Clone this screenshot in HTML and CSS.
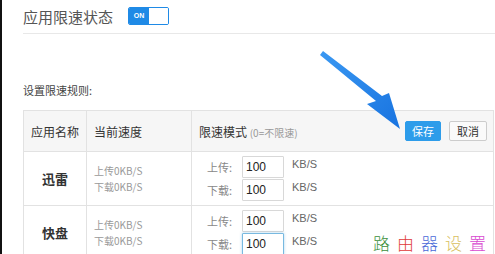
FILE: index.html
```html
<!DOCTYPE html>
<html lang="zh-CN">
<head>
    <meta charset="UTF-8">
    <meta name="viewport" content="width=device-width, initial-scale=1.0">
    <title>应用限速</title>
    <link rel="stylesheet" href="styles.css">
</head>
<body>
    <div class="page">
        <div class="status-bar">
            <h2 class="status-title">应用限速状态</h2>
            <div class="toggle">
                <span class="toggle-on">ON</span>
                <span class="toggle-knob"></span>
            </div>
        </div>

        <div class="rules-label">设置限速规则:</div>

        <table class="rules">
            <colgroup>
                <col class="col-name">
                <col class="col-speed">
                <col class="col-mode">
            </colgroup>
            <thead>
                <tr>
                    <th class="center">应用名称</th>
                    <th>当前速度</th>
                    <th>
                        <div class="mode-head">
                            <span>限速模式 <small>(0=不限速)</small></span>
                            <span class="actions">
                                <button class="btn btn-save">保存</button>
                                <button class="btn btn-cancel">取消</button>
                            </span>
                        </div>
                    </th>
                </tr>
            </thead>
            <tbody>
                <tr>
                    <td class="center app-name">迅雷</td>
                    <td class="speed">上传0KB/S<br>下载0KB/S</td>
                    <td>
                        <div class="limit">
                            <label>上传:</label><input type="text" value="100"><span class="unit">KB/S</span>
                        </div>
                        <div class="limit">
                            <label>下载:</label><input type="text" value="100"><span class="unit">KB/S</span>
                        </div>
                    </td>
                </tr>
                <tr>
                    <td class="center app-name">快盘</td>
                    <td class="speed">上传0KB/S<br>下载0KB/S</td>
                    <td>
                        <div class="limit">
                            <label>上传:</label><input type="text" value="100"><span class="unit">KB/S</span>
                        </div>
                        <div class="limit">
                            <label>下载:</label><input type="text" value="100" class="focused"><span class="unit">KB/S</span>
                        </div>
                    </td>
                </tr>
            </tbody>
        </table>

        <div class="watermark">
            <span class="w1">路</span><span class="w2">由</span><span class="w3">器</span><span class="w4">设</span><span class="w5">置</span>
        </div>

        <svg class="arrow" width="495" height="254" viewBox="0 0 495 254">
            <defs>
                <linearGradient id="arrowFill" x1="0" y1="0" x2="1" y2="1">
                    <stop offset="0" stop-color="#3a98f2"/>
                    <stop offset="1" stop-color="#1873e0"/>
                </linearGradient>
            </defs>
            <polygon points="320,55 323,51 382,96 389,93 400,129 367,104 376,101" fill="url(#arrowFill)"/>
        </svg>
    </div>
</body>
</html>
```

FILE: styles.css
```css
:root {
    --text-color: #444;
    --muted-color: #888;
    --border-color: #e2e2e2;
    --blue: #1f8ae6;
}

* {
    box-sizing: border-box;
}

body {
    margin: 0;
    font-family: "Noto Sans CJK SC", "Liberation Sans", sans-serif;
    color: var(--text-color);
    background: #fff;
    overflow: hidden;
}

.page {
    position: relative;
    height: 254px;
    border-left: 2px solid #111;
    padding-left: 21px;
}

.status-bar {
    display: flex;
    align-items: center;
    gap: 15px;
    height: 34px;
    padding-bottom: 1px;
    border-bottom: 1px solid #e8e8e8;
}

.status-title {
    margin: 0;
    font-size: 15px;
    font-weight: normal;
    color: #555;
}

.toggle {
    display: flex;
    width: 41px;
    height: 18px;
    border: 1px solid var(--blue);
    border-radius: 2px;
    overflow: hidden;
}

.toggle-on {
    width: 20px;
    background: var(--blue);
    color: #fff;
    font-family: "Liberation Sans", sans-serif;
    font-size: 7px;
    font-weight: bold;
    line-height: 16px;
    text-align: center;
}

.toggle-knob {
    flex: 1;
    background: #fff;
}

.rules-label {
    margin-top: 48px;
    font-size: 11px;
    line-height: 16px;
    color: #444;
}

.rules {
    width: 471px;
    margin-top: 12px;
    border-collapse: collapse;
    font-size: 12px;
}

.col-name { width: 63px; }
.col-speed { width: 105px; }

.rules th,
.rules td {
    border: 1px solid var(--border-color);
    padding: 0 7px;
    text-align: left;
    vertical-align: middle;
}

.rules th {
    height: 41px;
    background: #f6f6f6;
    font-weight: normal;
    color: #333;
}

.rules td {
    height: 54px;
}

.rules .center {
    text-align: center;
}

.mode-head {
    display: flex;
    align-items: center;
    justify-content: space-between;
}

.mode-head small {
    font-size: 10px;
    color: #999;
}

.actions {
    display: flex;
    gap: 8px;
    margin-right: -1px;
}

.btn {
    height: 20px;
    padding: 0;
    font-family: inherit;
    font-size: 11px;
    border-radius: 2px;
    cursor: pointer;
}

.btn-save {
    width: 36px;
    background: #2d9cea;
    border: 1px solid #2d9cea;
    color: #fff;
}

.btn-cancel {
    width: 38px;
    background: #fafafa;
    border: 1px solid #ccc;
    color: #333;
}

.app-name {
    font-size: 13px;
    font-weight: bold;
    color: #333;
}

.speed {
    font-size: 10px;
    line-height: 16px;
    color: #999;
    padding-top: 2px;
}

.limit {
    display: flex;
    align-items: flex-start;
    height: 23px;
    padding-left: 8px;
}

.limit label {
    width: 35px;
    font-size: 11px;
    line-height: 22px;
    color: var(--muted-color);
}

.limit input {
    width: 42px;
    height: 22px;
    padding: 0 3px;
    border: 1px solid #d8d8d8;
    border-radius: 1px;
    font-family: "Liberation Sans", sans-serif;
    font-size: 12px;
    color: #222;
}

.limit input.focused {
    border-color: #78b9e0;
    box-shadow: 0 0 3px rgba(90, 170, 220, 0.5);
}

.unit {
    margin-left: 8px;
    font-family: "Liberation Sans", sans-serif;
    font-size: 11px;
    line-height: 16px;
    color: #666;
}

.watermark {
    position: absolute;
    left: 371px;
    top: 230px;
    display: flex;
    gap: 7px;
    font-family: "Noto Sans CJK SC", serif;
    font-size: 17px;
    font-weight: 300;
}

.w1 { color: #3c8f3c; }
.w2 { color: #e03a3a; }
.w3 { color: #4a6ad8; }
.w4 { color: #d8c060; }
.w5 { color: #d84ad0; }

.arrow {
    position: absolute;
    left: -2px;
    top: 0;
    pointer-events: none;
}
```
